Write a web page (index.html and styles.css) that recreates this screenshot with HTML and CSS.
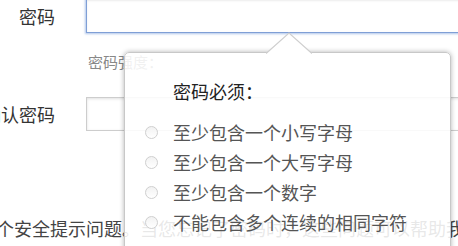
FILE: index.html
```html
<!DOCTYPE html>
<html lang="zh">
<head>
<meta charset="utf-8">
<link rel="stylesheet" href="styles.css">
</head>
<body>
<div class="form">
  <div class="field-row">
    <label class="label">密码</label>
    <div class="input input-focus"></div>
  </div>
  <div class="hint">密码强度：</div>
  <div class="field-row">
    <label class="label">确认密码</label>
    <div class="input"></div>
  </div>
  <div class="note">一个安全提示问题。当您忘记了密码时，这些问题可以帮助我们确认您的身份</div>
</div>

<div class="popup">
  <svg class="arrow" width="46" height="22" viewBox="0 0 46 22">
    <polygon points="0,22 23,1 46,22" fill="#fff"/>
    <polyline points="0,21.5 23,1 46,21.5" fill="none" stroke="#cfcfcf" stroke-width="1.2"/>
  </svg>
  <div class="popup-title">密码必须：</div>
  <ul class="rules">
    <li class="rule"><span class="radio"></span>至少包含一个小写字母</li>
    <li class="rule"><span class="radio"></span>至少包含一个大写字母</li>
    <li class="rule"><span class="radio"></span>至少包含一个数字</li>
    <li class="rule"><span class="radio"></span>不能包含多个连续的相同字符</li>
  </ul>
</div>
</body>
</html>
```

FILE: styles.css
```css
html, body {
  margin: 0;
  padding: 0;
  background: #fff;
}

body {
  position: relative;
  width: 458px;
  height: 246px;
  overflow: hidden;
  font-family: "Noto Sans CJK SC", "Noto Sans", sans-serif;
}

.form {
  margin-left: -18px;
  padding-top: 0;
  margin-top: -1px;
}

.field-row {
  display: flex;
  align-items: center;
  height: 34px;
  gap: 31px;
}

.label {
  width: 73px;
  text-align: right;
  font-size: 18px;
  line-height: 24px;
  color: #333;
  flex: none;
}

.input {
  flex: none;
  width: 420px;
  height: 34px;
  box-sizing: border-box;
  border: 1px solid #cdcdcd;
  box-shadow: inset 0 1px 3px rgba(0, 0, 0, 0.12);
  background: #fff;
}

.input-focus {
  border: 1px solid #7f9fd6;
  box-shadow: 0 0 2px 1px rgba(110, 150, 215, 0.55), inset 0 1px 2px rgba(0, 0, 0, 0.08);
}

.hint {
  margin-left: 106px;
  padding-top: 19px;
  height: 20px;
  line-height: 20px;
  margin-bottom: 25px;
  font-size: 15px;
  color: #888;
}

.note {
  margin-top: 85px;
  margin-left: -4px;
  white-space: nowrap;
  font-size: 18px;
  line-height: 24px;
  color: #444;
}

.popup {
  position: absolute;
  left: 124px;
  top: 52px;
  width: 327px;
  height: 230px;
  box-sizing: border-box;
  border: 1px solid #c8c8c8;
  border-radius: 5px;
  background: rgba(255, 255, 255, 0.88);
  box-shadow: 0 0 5px rgba(0, 0, 0, 0.3);
}

.arrow {
  position: absolute;
  left: 141px;
  top: -21px;
  display: block;
}

.popup-title {
  padding: 23px 0 0 48px;
  font-size: 18px;
  line-height: 30px;
  color: #222;
}

.rules {
  list-style: none;
  margin: 11px 0 0;
  padding: 0 0 0 20px;
}

.rule {
  display: flex;
  align-items: center;
  gap: 15px;
  height: 30px;
  font-size: 18px;
  color: #555;
}

.radio {
  flex: none;
  width: 13px;
  height: 13px;
  box-sizing: border-box;
  border: 1px solid #cfcfcf;
  border-radius: 50%;
  background: linear-gradient(#f2f2f2, #fff);
}
```
